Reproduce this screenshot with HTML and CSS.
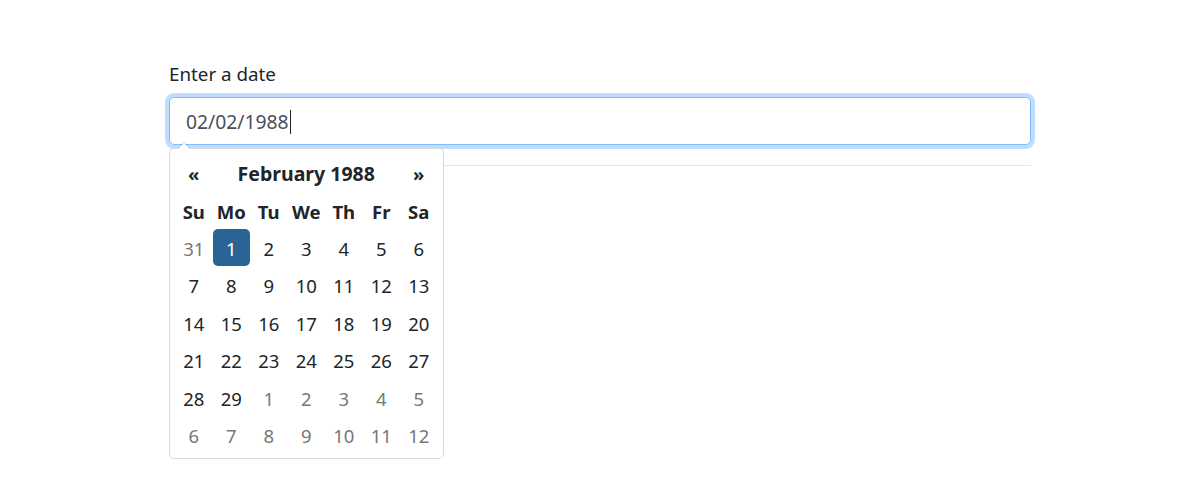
FILE: index.html
```html
<!DOCTYPE html>
<html>
<head>
  <meta charset="UTF-8">
  <title>Datepicker</title>
  <link rel="stylesheet" href="styles.css">
</head>
<body>
  <div class="container">
    <div class="form-group">
      <label for="date-input">Enter a date</label>
      <div class="input-wrap">
        <div class="form-control focused" id="date-input">02/02/1988<span class="text-cursor"></span></div>

        <!-- 日期选择下拉框 -->
        <div class="datepicker">
          <table class="calendar">
            <thead>
              <tr>
                <th class="prev">&laquo;</th>
                <th class="switch" colspan="5">February 1988</th>
                <th class="next">&raquo;</th>
              </tr>
              <tr class="dow">
                <th>Su</th><th>Mo</th><th>Tu</th><th>We</th><th>Th</th><th>Fr</th><th>Sa</th>
              </tr>
            </thead>
            <tbody>
              <tr><td class="old">31</td><td class="active">1</td><td>2</td><td>3</td><td>4</td><td>5</td><td>6</td></tr>
              <tr><td>7</td><td>8</td><td>9</td><td>10</td><td>11</td><td>12</td><td>13</td></tr>
              <tr><td>14</td><td>15</td><td>16</td><td>17</td><td>18</td><td>19</td><td>20</td></tr>
              <tr><td>21</td><td>22</td><td>23</td><td>24</td><td>25</td><td>26</td><td>27</td></tr>
              <tr><td>28</td><td>29</td><td class="new">1</td><td class="new">2</td><td class="new">3</td><td class="new">4</td><td class="new">5</td></tr>
              <tr><td class="new">6</td><td class="new">7</td><td class="new">8</td><td class="new">9</td><td class="new">10</td><td class="new">11</td><td class="new">12</td></tr>
            </tbody>
          </table>
        </div>
      </div>
    </div>
    <hr>
  </div>
</body>
</html>
```

FILE: styles.css
```css
html {
  height: 100%;
}

body {
  box-sizing: border-box;
  min-height: 100%;
  margin: 0;
  padding: 57px 0 0;
  font-family: "Noto Sans", "Liberation Sans", sans-serif;
  font-size: 18px;
  color: #212529;
  background-color: #fff;
}

.container {
  max-width: 862px;
  margin: 0 auto;
  padding: 0 19px;
}

.form-group {
  margin-bottom: 20px;
}

label {
  display: block;
  padding-top: 2px;
  line-height: 30px;
  margin-bottom: 8px;
  font-size: 18.8px;
}

.input-wrap {
  position: relative;
}

/* 输入框 */
.form-control {
  box-sizing: border-box;
  height: 48px;
  padding: 1px 16px 0;
  border: 1px solid #ced4da;
  border-radius: 5px;
  line-height: 46px;
  font-size: 19.3px;
  color: #495057;
}

.form-control.focused {
  border-color: #80bdff;
  box-shadow: 0 0 0 4px rgba(0, 123, 255, 0.25);
}

.text-cursor {
  display: inline-block;
  width: 1px;
  height: 24px;
  margin-left: 1px;
  vertical-align: -5px;
  background-color: #222;
}

hr {
  margin: 0;
  border: 0;
  border-top: 1px solid rgba(0, 0, 0, 0.1);
}

/* 日期选择器 */
.datepicker {
  position: absolute;
  top: 51px;
  left: 0;
  z-index: 10;
  padding: 5px;
  background-color: #fff;
  border: 1px solid rgba(0, 0, 0, 0.15);
  border-radius: 5px;
}

.datepicker::before,
.datepicker::after {
  content: "";
  position: absolute;
  border-left: 7px solid transparent;
  border-right: 7px solid transparent;
}

.datepicker::before {
  top: -7px;
  left: 7px;
  border-bottom: 7px solid rgba(0, 0, 0, 0.15);
}

.datepicker::after {
  top: -6px;
  left: 8px;
  border-left-width: 6px;
  border-right-width: 6px;
  border-bottom: 6px solid #fff;
}

.calendar {
  border-collapse: collapse;
  border-spacing: 0;
}

.calendar th,
.calendar td {
  width: 37.5px;
  height: 35.4px;
  padding: 2px 0 0;
  text-align: center;
  font-size: 18.5px;
  border-radius: 5px;
}

.calendar th {
  font-weight: bold;
}

.calendar .switch {
  font-size: 19.5px;
}

.calendar td.old,
.calendar td.new {
  color: #777;
}

.calendar td.active {
  background-color: #2a6396;
  color: #fff;
}
```
